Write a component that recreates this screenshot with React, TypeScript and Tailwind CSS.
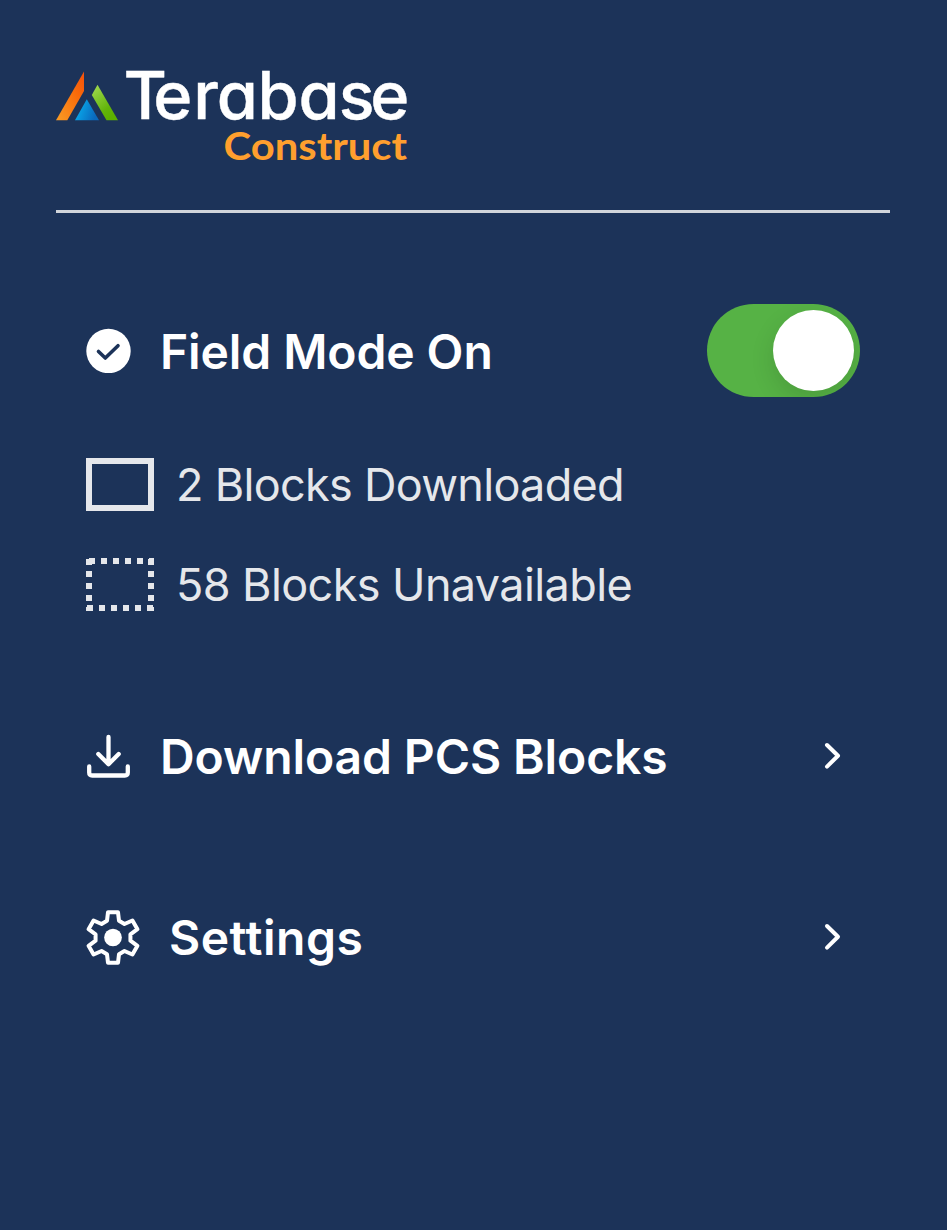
import type { ReactNode } from "react";

function Logo() {
  return (
    <svg className="block h-[100px] w-[360px] overflow-visible" viewBox="0 0 360 100" role="img" aria-label="Terabase Construct">
      <defs>
        <linearGradient id="orange" x1="1" y1="0" x2="0" y2="1">
          <stop offset="0" stopColor="#f4500c" />
          <stop offset="0.35" stopColor="#f96a0a" />
          <stop offset="1" stopColor="#f99d25" />
        </linearGradient>
        <linearGradient id="green" x1="0" y1="0" x2="0.6" y2="1">
          <stop offset="0" stopColor="#a5dc55" />
          <stop offset="0.75" stopColor="#62b40a" />
          <stop offset="1" stopColor="#5cb000" />
        </linearGradient>
        <linearGradient id="blue" x1="0" y1="0" x2="1" y2="0.3">
          <stop offset="0.1" stopColor="#08b0f0" />
          <stop offset="1" stopColor="#0a68bd" />
        </linearGradient>
      </defs>
      <path d="M28 11.5V31L11.3 60.3H0Z" fill="url(#orange)" />
      <path d="M41.5 24.7L35.8 35L50.5 60.3H62Z" fill="url(#green)" />
      <path d="M30.8 39.3L43 60.3H19Z" fill="url(#blue)" />
      <text
        transform="scale(1.02 1)"
        x="66.2 95.4 134.5 157.7 197.6 237.8 277.2 308"
        y="59.4"
        fill="#fff"
        stroke="#fff"
        strokeWidth="0.4"
        className="font-['Inter',sans-serif] text-[65.3px] font-medium [font-feature-settings:'cv11']"
      >
        Terabase
      </text>
      <text
        x="167.5"
        y="99.9"
        fill="#ff9f2e"
        textLength="183.5"
        lengthAdjust="spacingAndGlyphs"
        className="font-['Lato',sans-serif] text-[38.5px] font-bold"
      >
        Construct
      </text>
    </svg>
  );
}

function CheckIcon() {
  return (
    <svg className="block h-[45px] w-[45px]" viewBox="0 0 45 45">
      <circle cx="22.5" cy="23" r="22.2" fill="#fff" />
      <path d="M12.5 23.5L19.3 30L32 17.7" fill="none" stroke="#1c3359" strokeWidth="3.6" strokeLinecap="round" strokeLinejoin="round" />
    </svg>
  );
}

function DownloadIcon() {
  return (
    <svg className="block h-[45px] w-[45px]" viewBox="0 0 45 45" fill="none" stroke="#fff" strokeWidth="4.3" strokeLinecap="round" strokeLinejoin="round">
      <path d="M22.5 3V30M12.3 20L22.5 30.2L32.7 20M3.2 32.5V38.5Q3.2 41.5 6.2 41.5H38.8Q41.8 41.5 41.8 38.5V32.5" />
    </svg>
  );
}

function GearIcon() {
  const tooth = [[-18, -50], [-15, -76], [15, -76], [18, -50]];
  const points = [0, 60, 120, 180, 240, 300].flatMap((angle) => {
    const a = (angle * Math.PI) / 180;
    return tooth.map(([x, y]) => `${x * Math.cos(a) - y * Math.sin(a)},${x * Math.sin(a) + y * Math.cos(a)}`);
  });
  return (
    <svg className="block h-[54px] w-[54px] overflow-visible" viewBox="-81 -82.5 162 162">
      <polygon points={points.join(" ")} fill="none" stroke="#fff" strokeWidth="12" strokeLinejoin="round" />
      <circle r="26.5" fill="#fff" />
    </svg>
  );
}

function Chevron() {
  return (
    <svg className="block h-[28px] w-[18px]" viewBox="0 0 18 28" fill="none" stroke="#fff" strokeWidth="4" strokeLinecap="round" strokeLinejoin="round">
      <path d="M3 3L14 13.8L3 24.6" />
    </svg>
  );
}

function Toggle() {
  return (
    <button role="switch" aria-checked="true" aria-label="Field Mode" className="flex h-[93px] w-[153px] items-center justify-end overflow-hidden rounded-full bg-[#56b245] p-1.5">
      <span className="h-[81px] w-[81px] rounded-full bg-white shadow-[0_9px_24px_rgba(0,0,0,0.12)]" />
    </button>
  );
}

function BlockCount({ icon, children }: { icon: ReactNode; children: ReactNode }) {
  return (
    <div className="flex h-[53px] items-center gap-[22px] text-[45px] leading-[53px] text-[#e5e7eb]">
      {icon}
      {children}
    </div>
  );
}

export default function App() {
  return (
    <div className="h-[1230px] w-[947px] bg-[#1c3359] pt-[60px] pr-[57px] pl-14 font-['Inter',sans-serif] text-white">
      <header className="h-[153px] border-b-[3px] border-[#d1d5db]">
        <Logo />
      </header>
      <main className="px-[30px]">
        <section className="mt-[91px] flex h-[93px] items-center justify-between">
          <div className="flex items-center gap-[29px]">
            <CheckIcon />
            <h2 className="pt-0.5 text-[48px] leading-[60px] font-semibold tracking-[-0.1px]">Field Mode On</h2>
          </div>
          <Toggle />
        </section>
        <section className="mt-[61px] flex flex-col gap-[47px]">
          <BlockCount icon={<span className="h-[53px] w-[68px] border-[6px] border-[#e5e7eb]" />}>
            <span className="tracking-[-0.7px]">2 Blocks Downloaded</span>
          </BlockCount>
          <BlockCount
            icon={
              <svg className="h-[53px] w-[68px]" viewBox="0 0 68 53" stroke="#e5e7eb" strokeWidth="6" strokeDasharray="6 6">
                <path d="M3 3H68" />
                <path d="M65 1V53" />
                <path d="M1 50H68" />
                <path d="M3 1V53" />
              </svg>
            }
          >
            <span className="tracking-[-0.6px]">58 Blocks Unavailable</span>
          </BlockCount>
        </section>
        <nav>
          <a className="mt-[115px] flex h-[60px] items-center justify-between pr-[18px]">
            <span className="flex items-center gap-[29px]">
              <DownloadIcon />
              <span className="pt-0.5 text-[48px] leading-[60px] font-semibold tracking-[-0.1px]">Download PCS Blocks</span>
            </span>
            <Chevron />
          </a>
          <a className="mt-[121px] flex h-[60px] items-center justify-between pr-[18px]">
            <span className="flex items-center gap-[29px]">
              <GearIcon />
              <span className="pt-0.5 text-[48px] leading-[60px] font-semibold tracking-[0.5px]">Settings</span>
            </span>
            <Chevron />
          </a>
        </nav>
      </main>
    </div>
  );
}
